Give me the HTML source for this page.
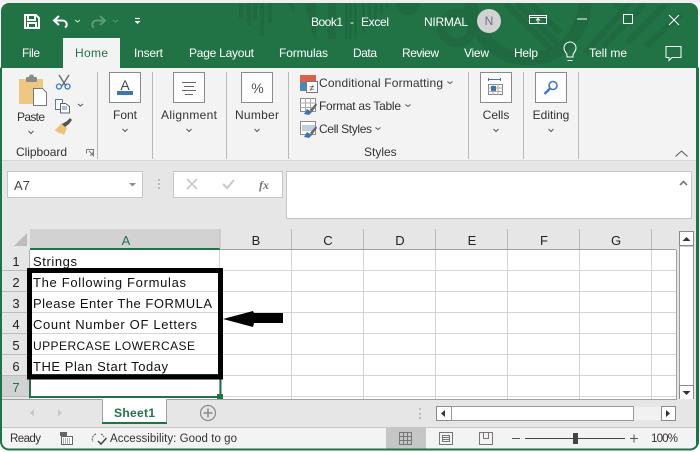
<!DOCTYPE html>
<html><head><meta charset="utf-8">
<style>
html,body{margin:0;padding:0;background:#fff;width:700px;height:452px;overflow:hidden}
svg{display:block}
text{font-family:"Liberation Sans",sans-serif;font-size:12px;fill:#333}
.w{fill:#fff}
.c{font-size:13px;fill:#111}
.h{font-size:13px;fill:#222;text-anchor:middle}
.m{text-anchor:middle}
.g{stroke:#d4d4d4;stroke-width:1;fill:none}
.ch{fill:none;stroke:#555;stroke-width:1}
.box{fill:#fdfdfd;stroke:#8a8a8a;stroke-width:1}
</style></head><body>
<svg width="700" height="452" viewBox="0 0 700 452" xmlns="http://www.w3.org/2000/svg">
<!-- window -->
<rect x="1" y="3" width="697" height="447" rx="8" fill="#217346"/>
<rect x="0" y="0" width="700" height="3" fill="#efefef"/>
<!-- title pattern -->
<clipPath id="tb"><rect x="1" y="3" width="697" height="65" rx="8"/></clipPath>
<g clip-path="url(#tb)" fill="#1f6a41" stroke="none">
<path d="M239 3h4v16h-4zM247 3h4v23h-4zM253 3h4v17h-4zM260 3h4v33h-4zM268 3h4v20h-4z"/>
<path d="M288 3h6v11z"/>
<path d="M305 3h11v36h-2zM328 3h8v36h-8zM345 3h3v36h-3zM349 3h3v36h-3zM354 3h3v36h-3zM362 3h3v30h-3zM368 3h3v24h-3zM374 3h3v17h-3zM380 3h3v12h-3zM386 3h3v6h-3z"/>
<path d="M396 3h24a12 12 0 0 1-24 0z"/>
<circle cx="457" cy="28" r="15" fill="none" stroke="#1f6a41" stroke-width="9"/>
<circle cx="528" cy="2" r="57" fill="none" stroke="#1f6a41" stroke-width="13"/>
<g stroke="#1f6a41" stroke-width="6" fill="none">
<path d="M505 3l45 45M517 3l40 40M530 3l30 30M615 3l7 7"/>
<path d="M630 3l-45 50M645 3l-42 44M665 5l-38 38M682 14l-36 32"/>
</g>
</g>
<!-- QAT -->
<path d="M25 15h11l3 3v10h-14z M28 15v5h7v-5 M28 28v-5h8v5" fill="none" stroke="#fff" stroke-width="2"/>
<path d="M59 16l-5 4.500 5 4.500" fill="none" stroke="#fff" stroke-width="2"/><path d="M54 20.500h8c5 0 6 5 3 7" fill="none" stroke="#fff" stroke-width="2"/>
<path d="M75 20l2.500 2 2.500-2" fill="none" stroke="#d5e5db" stroke-width="1"/>
<path d="M100 16l5 4.500-5 4.500" fill="none" stroke="#5c9a78" stroke-width="2"/><path d="M105 20.500h-8c-5 0-6 5-3 7" fill="none" stroke="#5c9a78" stroke-width="2"/>
<path d="M113 20l2.500 2 2.500-2" fill="none" stroke="#5c9a78" stroke-width="1"/>
<path d="M135 18.500h5" stroke="#fff" stroke-width="1.200"/><path d="M134.500 21h6l-3 3z" fill="#fff"/>
<text x="311" y="26" class="w" textLength="32">Book1</text>
<text x="350" y="26" class="w">-</text>
<text x="361" y="26" class="w" textLength="28">Excel</text>
<text x="424" y="26" class="w" textLength="44">NIRMAL</text>
<circle cx="489" cy="21" r="12" fill="#d2d2d2"/><text x="489" y="25" class="m" style="fill:#6b6f8c">N</text>
<rect x="529.500" y="15.500" width="17" height="8" fill="none" stroke="#fff"/><path d="M529 17.500h18" stroke="#fff"/><path d="M538 23v-4M536 20.500l2-2 2 2" stroke="#fff" fill="none"/>
<path d="M577 19h10" stroke="#fff"/>
<rect x="623.500" y="14.500" width="9" height="9" fill="none" stroke="#fff"/>
<path d="M669 15l10 10M679 15l-10 10" stroke="#fff" stroke-width="1"/>
<!-- tabs -->
<rect x="63" y="38" width="57" height="31" fill="#f3f3f3"/>
<text x="22" y="57" class="w" textLength="18">File</text>
<text x="75" y="57" style="fill:#217346" textLength="33">Home</text>
<text x="134" y="57" class="w" textLength="29">Insert</text>
<text x="189" y="57" class="w" textLength="65">Page Layout</text>
<text x="279" y="57" class="w" textLength="49">Formulas</text>
<text x="353" y="57" class="w" textLength="24">Data</text>
<text x="402" y="57" class="w" textLength="37">Review</text>
<text x="464" y="57" class="w" textLength="25">View</text>
<text x="514" y="57" class="w" textLength="24">Help</text>
<path d="M567 57v-2c0-2-3-3-3-7a6 6 0 0 1 12 0c0 4-3 5-3 7v2zM567.500 60.500h5" fill="none" stroke="#fff"/>
<text x="589" y="57" class="w" textLength="38">Tell me</text>
<path d="M666 46.500h15v11h-9l-3 3v-3h-3z" fill="none" stroke="#fff"/>
<!-- ribbon -->
<rect x="2" y="68" width="694" height="92" fill="#f3f3f3"/>
<rect x="63" y="68" width="57" height="2" fill="#f3f3f3"/>
<rect x="2" y="160" width="694" height="1" fill="#d8d8d8"/>
<rect x="2" y="161" width="694" height="68" fill="#e6e6e6"/>
<g stroke="#b9b9b9"><path d="M97.500 72v87M152.500 72v87M226.500 72v87M288.500 72v87M468.500 72v87M523.500 72v87M578.500 72v87"/></g>
<!-- clipboard -->
<path d="M19 79h24v25h-24z" fill="#eec780"/><rect x="26" y="77" width="11" height="5" rx="1" fill="#8a8a8a"/><circle cx="31.500" cy="77" r="2.500" fill="#8a8a8a"/>
<path d="M33.500 88.500h9l4 4v13h-13z" fill="#fff" stroke="#777"/>
<text x="17" y="121" textLength="28">Paste</text>
<path d="M28.500 131l2.500 2.500 2.500-2.500" class="ch"/>
<path d="M59 75l7 11M69 75l-7 11" stroke="#666" fill="none" stroke-width="1.300"/><circle cx="59" cy="86.500" r="2.500" fill="none" stroke="#3e7ab8" stroke-width="1.300"/><circle cx="67.500" cy="86.500" r="2.500" fill="none" stroke="#3e7ab8" stroke-width="1.300"/>
<path d="M55.500 99.500h7v10h-7z" fill="#fff" stroke="#4f7fb0"/><path d="M60.500 103.500h5l4 3v6.500h-9z" fill="#fff" stroke="#666"/><path d="M62 107h5M62 109h5" stroke="#4f7fb0"/>
<path d="M78 104l2.500 2 2.500-2" class="ch"/>
<path d="M55 130l7-7 5 5-3 7-3-2-1 1-2-2-1 0z" fill="#eec07a"/><path d="M62 124l5-3 3-3 2 2-3 4-4 3z" fill="#555"/>
<text x="16" y="156" textLength="51">Clipboard</text>
<path d="M86.500 149.500h7v7" fill="none" stroke="#777"/><path d="M89 151l4 4M93 152v3h-3" fill="none" stroke="#777"/><path d="M86.500 149.500v4M86.500 149.500h3" stroke="#777"/>
<!-- Font -->
<rect x="109.500" y="72.500" width="31" height="30" fill="#fdfdfd" stroke="#8a8a8a"/>
<text x="125" y="90" class="m" style="font-size:14px;fill:#444">A</text>
<rect x="117" y="91" width="16" height="4" fill="#3e74b0"/>
<text x="125" y="119" class="m">Font</text>
<path d="M122.500 129l2.500 2.500 2.500-2.500" class="ch"/>
<!-- Alignment -->
<rect x="173.500" y="72.500" width="31" height="30" fill="#fdfdfd" stroke="#8a8a8a"/>
<path d="M182 82.500h14M184 86.500h10M182 90.500h14M185 94.500h8" stroke="#666"/>
<text x="161" y="119" textLength="56">Alignment</text>
<path d="M186.500 129l2.500 2.500 2.500-2.500" class="ch"/>
<!-- Number -->
<rect x="241.500" y="72.500" width="31" height="30" fill="#fdfdfd" stroke="#8a8a8a"/>
<text x="257.500" y="93" class="m" style="font-size:14px;fill:#555">%</text>
<text x="235" y="119" textLength="44">Number</text>
<path d="M254.500 129l2.500 2.500 2.500-2.500" class="ch"/>
<!-- Styles -->
<rect x="300" y="75" width="16" height="7" fill="#d9634a"/><rect x="300" y="82" width="7" height="9" fill="#4a86c0"/><rect x="307" y="82" width="5" height="4" fill="#f3f3f3"/>
<rect x="306.500" y="81.500" width="11" height="11" fill="#fdfdfd" stroke="#777"/><text x="312" y="91" class="m" style="font-size:9px">≠</text>
<text x="319" y="87" textLength="124">Conditional Formatting</text>
<path d="M447.500 81.500l2.500 2 2.500-2" class="ch"/>
<g stroke="#8a8a8a" fill="#fff"><rect x="300.500" y="98.500" width="15" height="13"/></g><path d="M305.500 98v14M310.500 98v14M300 103h16M300 107.500h16" stroke="#aaa"/>
<path d="M304 114l3-5 5 3-3 3z" fill="#3e74b0"/><path d="M310 110l6-7 1 2-5 7z" fill="#666"/>
<text x="319" y="110" textLength="82">Format as Table</text>
<path d="M405.500 104.500l2.500 2 2.500-2" class="ch"/>
<rect x="300.500" y="121.500" width="15" height="13" fill="#fff" stroke="#8a8a8a"/><rect x="302" y="125" width="13" height="6" fill="#bcd0e0"/>
<path d="M304 137l3-5 5 3-3 3z" fill="#3e74b0"/><path d="M310 133l6-7 1 2-5 7z" fill="#666"/>
<text x="319" y="133" textLength="53">Cell Styles</text>
<path d="M375.500 127.500l2.500 2 2.500-2" class="ch"/>
<text x="364" y="156">Styles</text>
<!-- Cells -->
<rect x="480.500" y="72.500" width="31" height="30" fill="#fdfdfd" stroke="#8a8a8a"/>
<path d="M488.500 79.500h12" stroke="#3e74b0"/><path d="M488.500 78v3M500.500 78v3" stroke="#3e74b0"/>
<rect x="488.500" y="84.500" width="14" height="10" fill="#fff" stroke="#888"/><path d="M493 84v11M498 84v11M488 88h15M488 91.500h15" stroke="#aaa"/><rect x="491" y="86" width="5" height="5" fill="#3e74b0"/>
<text x="496" y="119" class="m">Cells</text>
<path d="M493.500 129l2.500 2.500 2.500-2.500" class="ch"/>
<!-- Editing -->
<rect x="535.500" y="72.500" width="31" height="30" fill="#fdfdfd" stroke="#8a8a8a"/>
<circle cx="553" cy="85.500" r="4" fill="none" stroke="#3e7ab8" stroke-width="1.600"/><path d="M550 88.500l-5.500 5.500" stroke="#3e7ab8" stroke-width="2.400"/>
<text x="551" y="119" class="m">Editing</text>
<path d="M548.500 129l2.500 2.500 2.500-2.500" class="ch"/>
<path d="M675.500 156.500l6-5.500 6 5.500" fill="none" stroke="#555"/>
<!-- formula bar -->
<rect x="7.500" y="171.500" width="135" height="26" fill="#fff" stroke="#c6c6c6"/>
<text x="14" y="190" style="font-size:13px;fill:#444">A7</text>
<path d="M129 183h7l-3.500 3.500z" fill="#8a8a8a"/>
<path d="M158 179h2v2h-2zM158 183h2v2h-2zM158 187h2v2h-2z" fill="#bbb"/>
<rect x="173.500" y="171.500" width="109" height="26" fill="#fff" stroke="#c6c6c6"/>
<path d="M187 179l10 10M197 179l-10 10" stroke="#c9c9c9" stroke-width="1.600"/>
<path d="M223 184l4 4 7-8" fill="none" stroke="#c9c9c9" stroke-width="2"/>
<text x="259" y="189" style="font-family:'Liberation Serif',serif;font-style:italic;font-weight:bold;font-size:12px;fill:#777">fx</text>
<rect x="286.500" y="171.500" width="405" height="47" fill="#fff" stroke="#c6c6c6"/>
<path d="M680 185l3.500-3.500 3.500 3.500" fill="none" stroke="#777" stroke-width="1.600"/>
<!-- headers -->
<rect x="2" y="229" width="694" height="170" fill="#e6e6e6"/>
<rect x="30" y="250" width="646" height="149" fill="#fff"/>
<path d="M14 246l13-13v13z" fill="#bdbdbd"/>
<rect x="30" y="229" width="190" height="20" fill="#d2d2d2"/>
<rect x="2" y="375" width="28" height="21" fill="#d2d2d2"/>
<g stroke="#bcbcbc"><path d="M291.500 229v20M363.500 229v20M435.500 229v20M507.500 229v20M579.500 229v20M651.500 229v20"/><path d="M2 270.500h28M2 291.500h28M2 312.500h28M2 333.500h28M2 354.500h28M2 375.500h28M2 396.500h28"/></g>
<rect x="30" y="249" width="646" height="1" fill="#a0a0a0"/>
<rect x="29" y="250" width="1" height="149" fill="#b0b0b0"/>
<rect x="30" y="248" width="190" height="2" fill="#217346"/>
<path d="M220 229v20" stroke="#bcbcbc"/>
<text x="126" y="245" class="h" style="fill:#217346">A</text>
<text x="256" y="245" class="h">B</text><text x="328" y="245" class="h">C</text><text x="400" y="245" class="h">D</text><text x="472" y="245" class="h">E</text><text x="544" y="245" class="h">F</text><text x="616" y="245" class="h">G</text>
<text x="16" y="266" class="h">1</text><text x="16" y="287" class="h">2</text><text x="16" y="308" class="h">3</text><text x="16" y="329" class="h">4</text><text x="16" y="350" class="h">5</text><text x="16" y="371" class="h">6</text><text x="16" y="392" class="h" style="fill:#217346">7</text>
<!-- grid -->
<path class="g" d="M219.500 250v149M291.500 250v149M363.500 250v149M435.500 250v149M507.500 250v149M579.500 250v149M651.500 250v149M30 270.500h646M30 291.500h646M30 312.500h646M30 333.500h646M30 354.500h646M30 375.500h646M30 396.500h646"/>
<!-- text -->
<text x="33" y="266" class="c" textLength="44">Strings</text>
<text x="33" y="287" class="c" textLength="153">The Following Formulas</text>
<text x="33" y="308" class="c" textLength="179">Please Enter The FORMULA</text>
<text x="33" y="329" class="c" textLength="164">Count Number OF Letters</text>
<text x="33" y="350" class="c" textLength="162" style="font-size:12px">UPPERCASE LOWERCASE</text>
<text x="33" y="371" class="c" textLength="135">THE Plan Start Today</text>
<!-- selection -->
<rect x="30" y="375" width="190.500" height="22" fill="none" stroke="#217346" stroke-width="2"/>
<rect x="217" y="394" width="6" height="6" fill="#217346"/>
<!-- black box -->
<rect x="29.500" y="270.500" width="191" height="106.500" fill="none" stroke="#000" stroke-width="5"/>
<!-- arrow -->
<path d="M223 319l30-8 1 2h29v10h-29l-1 4z" fill="#000"/>
<!-- scrollbar -->
<rect x="676" y="229" width="20" height="170" fill="#e6e6e6"/>
<rect x="679.500" y="246" width="14" height="140" fill="#fff" stroke="#9a9a9a"/>
<rect x="679.500" y="231.500" width="14" height="14" fill="#fff" stroke="#8a8a8a"/><path d="M682.500 241l4-4 4 4z" fill="#333"/>
<rect x="679.500" y="385.500" width="14" height="14" fill="#fff" stroke="#8a8a8a"/><path d="M682.500 391h8l-4 4z" fill="#333"/>
<path d="M676.500 250v149" stroke="#a0a0a0"/>
<!-- sheet bar -->
<rect x="2" y="399" width="694" height="28" fill="#e6e6e6"/>
<rect x="2" y="399" width="675" height="1" fill="#a0a0a0"/>
<rect x="2" y="427" width="694" height="1" fill="#c8c8c8"/>
<path d="M34 409v8l-4-4zM58 409v8l4-4z" fill="#c9c9c9"/>
<rect x="102.500" y="399" width="64" height="24" fill="#fff"/>
<path d="M102.500 399.500v24M166.500 399.500v24" stroke="#a0a0a0"/>
<rect x="102" y="422" width="65" height="2" fill="#217346"/>
<text x="134.500" y="417" class="m" style="font-weight:bold;fill:#217346" textLength="41">Sheet1</text>
<circle cx="208" cy="413" r="7.500" fill="none" stroke="#8a8a8a" stroke-width="1.200"/><path d="M203.500 413h9M208 408.500v9" stroke="#8a8a8a" stroke-width="1.500"/>
<path d="M419 408h2v2h-2zM419 413h2v2h-2zM419 417h2v2h-2z" fill="#bbb"/>
<rect x="436.500" y="406.500" width="15" height="14" fill="#fff" stroke="#8a8a8a"/><path d="M445 410v7l-4-3.500z" fill="#333"/>
<rect x="451.500" y="406.500" width="182" height="14" fill="#fff" stroke="#9a9a9a"/>
<rect x="634" y="407" width="27" height="13" fill="#f1f1f1"/>
<rect x="661.500" y="406.500" width="14" height="14" fill="#fff" stroke="#8a8a8a"/><path d="M666 410v7l4-3.500z" fill="#333"/>
<!-- status -->
<rect x="2" y="428" width="694" height="21" fill="#f3f3f3"/>
<text x="10" y="442" style="font-size:11.500px" textLength="31">Ready</text>
<rect x="60" y="432" width="7" height="4" fill="#666"/><rect x="61.500" y="436.500" width="11" height="8" fill="#fff" stroke="#666"/><path d="M63 439h8M63 441h8M63 443h8" stroke="#666" stroke-dasharray="1 1"/>
<path d="M96 434a5.500 5.500 0 0 0-3 8M101 434a5.500 5.500 0 0 1 3 3" fill="none" stroke="#555" stroke-dasharray="2 1"/><path d="M98 441l3 3 5.500-6" fill="none" stroke="#444" stroke-width="1.500"/>
<text x="110" y="442" style="font-size:11.500px" textLength="127">Accessibility: Good to go</text>
<rect x="386" y="428" width="40" height="21" fill="#c6c6c6"/>
<g stroke="#777" fill="none"><rect x="399.500" y="432.500" width="12" height="12"/><path d="M403.500 432v13M407.500 432v13M399 436.500h13M399 440.500h13"/>
<rect x="439.500" y="432.500" width="13" height="12"/><rect x="442.500" y="435.500" width="7" height="6"/><path d="M443 437.500h6M443 439.500h6"/>
<path d="M479.500 432.500h13v12h-13zM483.500 432.500v6h5v-6"/></g>
<path d="M512 438.500h8" stroke="#555"/>
<path d="M525 438.500h100" stroke="#444"/>
<rect x="573" y="433" width="5" height="11" fill="#444"/>
<path d="M630 438.500h8M634 434.500v8" stroke="#555"/>
<text x="651" y="442" style="font-size:11.500px" textLength="27">100%</text>
<!-- frame -->
<path d="M1 68v374a8 8 0 0 0 8 8h681a8 8 0 0 0 8-8v-374" fill="none" stroke="#217346" stroke-width="2" transform="translate(0 -.5)"/>
</svg>
</body></html>
